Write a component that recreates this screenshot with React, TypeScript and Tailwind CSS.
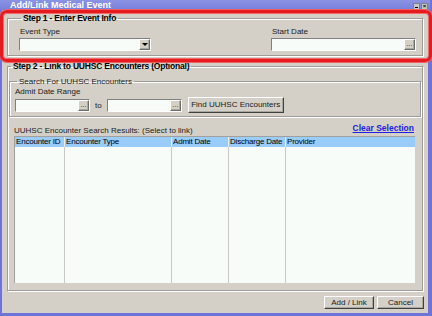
import React from "react";

const font = "font-['Liberation_Sans',Arial,sans-serif]";

function Bevel({ children, className = "" }: { children?: React.ReactNode; className?: string }) {
  return (
    <div
      className={`flex items-center justify-center whitespace-nowrap bg-[#d4d0c8] border border-t-white border-l-white border-r-[#6c6c68] border-b-[#6c6c68] shadow-[inset_-1px_-1px_0_#a8a8a0] ${className}`}
    >
      {children}
    </div>
  );
}

function DateInput({ width }: { width: string }) {
  return (
    <div className={`flex h-[13px] ${width} bg-[#f8fcf8] border border-t-[#808080] border-l-[#808080] border-r-white border-b-white`}>
      <div className="flex-1" />
      <Bevel className="w-[11px] h-full text-[7px] leading-none pb-[3px]">...</Bevel>
    </div>
  );
}

function Group({ title, bold, className = "", children }: { title: string; bold?: boolean; className?: string; children: React.ReactNode }) {
  return (
    <fieldset
      className={`border border-[#9c9c98] shadow-[1px_1px_0_#fff,inset_1px_1px_0_#fff] ${className}`}
    >
      <legend className={`ml-[2px] px-[2px] leading-[9px] whitespace-nowrap ${bold ? "font-bold text-[8.5px] tracking-[-0.2px] text-black" : "text-[8px] text-[#202020]"}`}>
        {title}
      </legend>
      {children}
    </fieldset>
  );
}

export default function App() {
  const columns = [
    { label: "Encounter ID", w: "w-[50px]" },
    { label: "Encounter Type", w: "w-[107px]" },
    { label: "Admit Date", w: "w-[57px]" },
    { label: "Discharge Date", w: "w-[57px]" },
    { label: "Provider", w: "flex-1" },
  ];

  return (
    <div className={`relative w-[432px] h-[316px] flex flex-col bg-[#d4d0c8] border-l-[2px] border-r-[4px] border-b-[3px] border-[#6f72d8] ${font}`}>
      {/* title bar */}
      <div className="h-[10px] -mx-[2px] flex items-start justify-between bg-gradient-to-b from-[#8a93e4] to-[#7680dc] pl-[10px] pr-[2px]">
        <span className="text-[9px] font-bold text-white leading-[10px]">Add/Link Medical Event</span>
        <div className="flex gap-[1px] mt-[3px]">
          <div className="w-[7px] h-[7px] bg-[#c8c8c0] border border-[#808080] flex items-end justify-center">
            <div className="w-[3px] h-[1px] bg-black mb-[1px]" />
          </div>
          <div className="w-[7px] h-[7px] bg-[#c8c8c0] border border-[#808080] text-[6px] leading-[5px] text-center font-bold">×</div>
        </div>
      </div>

      <div className="flex-1 flex flex-col px-[5px] pt-[4px] text-[8px] text-[#202020]">
        {/* Step 1 */}
        <Group title="Step 1 -  Enter Event Info" bold className="h-[42px] px-[11px]">
          <div className="flex justify-between pt-[4px]">
            <div className="flex flex-col gap-[1px] w-[132px]">
              <span className="leading-[10px] pl-[1px]">Event Type</span>
              <div className="flex h-[13px] bg-[#f8fcf8] border border-t-[#808080] border-l-[#808080] border-r-white border-b-white">
                <div className="flex-1" />
                <Bevel className="w-[11px] h-full">
                  <div className="w-0 h-0 border-l-[3px] border-r-[3px] border-t-[3px] border-l-transparent border-r-transparent border-t-black" />
                </Bevel>
              </div>
            </div>
            <div className="flex flex-col gap-[1px] mr-[-5px]">
              <span className="leading-[10px] pl-[1px]">Start Date</span>
              <DateInput width="w-[145px]" />
            </div>
          </div>
        </Group>

        {/* Step 2 */}
        <Group title="Step 2 - Link to UUHSC Encounters (Optional)" bold className="mt-[6px] h-[229px] px-[1px]">
          <Group title="Search For UUHSC Encounters" className="h-[40px] px-[5px] mt-[6px]">
            <div className="flex flex-col">
              <span className="leading-[10px] pt-[1px]">Admit Date Range</span>
              <div className="flex items-center mt-[1px]">
                <DateInput width="w-[75px]" />
                <span className="mx-[5px] leading-none">to</span>
                <DateInput width="w-[75px]" />
                <Bevel className="ml-[6px] w-[96px] h-[16px] -mt-[1px] border-r-[#404040] border-b-[#404040] text-[8px]">
                  Find UUHSC Encounters
                </Bevel>
              </div>
            </div>
          </Group>

          <div className="flex justify-between px-[5px] mt-[8px] h-[11px]">
            <span className="leading-[10px] self-end">UUHSC Encounter Search Results: (Select to link)</span>
            <span className="leading-[10px] font-bold text-[8.5px] text-[#2020e0] underline mr-[2px] -mt-[2px]">Clear Selection</span>
          </div>

          <div className="mx-[5px] mr-[6px] mt-[0px] h-[147px] flex flex-col bg-[#f8fcf8] border-t border-l border-[#a0a0a0]">
            <div className="flex h-[10px] bg-[#99ccf8]">
              {columns.map((c, i) => (
                <div key={c.label} className={`${c.w} ${i < 4 ? "border-r border-[#ececec]" : ""} pl-[1px] leading-[10px] text-black whitespace-nowrap overflow-hidden tracking-[-0.2px]`}>
                  {c.label}
                </div>
              ))}
            </div>
            <div className="flex flex-1">
              {columns.map((c, i) => (
                <div key={c.label} className={`${c.w} ${i < 4 ? "border-r border-[#c8c8c8]" : ""}`} />
              ))}
            </div>
          </div>
        </Group>

        {/* buttons */}
        <div className="flex justify-end gap-[3px] mt-[5px] mr-[-1px]">
          <Bevel className="w-[50px] h-[13px] border-r-[#404040] border-b-[#404040] text-[8px]">Add / Link</Bevel>
          <Bevel className="w-[47px] h-[13px] border-r-[#404040] border-b-[#404040] text-[8px]">Cancel</Bevel>
        </div>
      </div>

      {/* red highlight annotation */}
      <div className="absolute left-[-2px] top-[10px] w-[432px] h-[52px] rounded-[7px] border-[3px] border-[#e41c20] shadow-[inset_0_0_0_1px_#f46868,0_0_0_1px_#f06060]" />
    </div>
  );
}
